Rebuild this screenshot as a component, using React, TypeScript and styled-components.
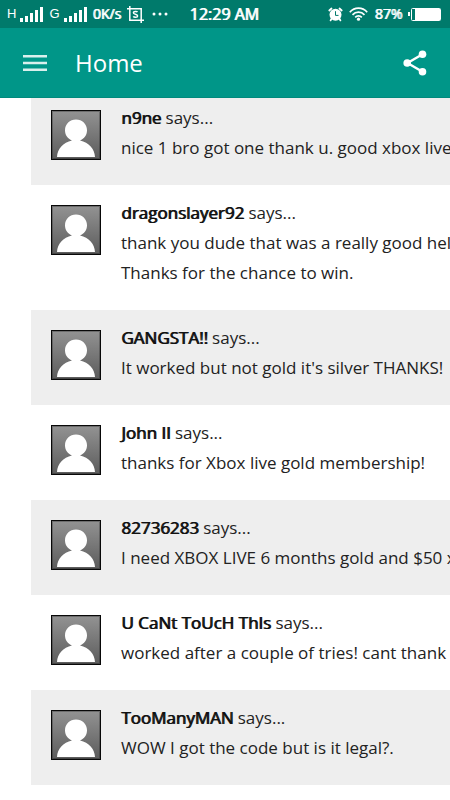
import React from "react";
import styled, { createGlobalStyle } from "styled-components";

const GlobalStyle = createGlobalStyle`
  * { box-sizing: border-box; }
  body {
    margin: 0;
    background: #ffffff;
    color: #222222;
    font-family: "Open Sans", "Noto Sans", sans-serif;
  }
`;

const Screen = styled.div`
  min-height: 100vh;
  overflow: hidden;
`;

const TopBar = styled.header`
  position: relative;
  z-index: 1;
  color: #ffffff;
  background: #009688;
  border-bottom: 1px solid #008a7d;
`;

const StatusBar = styled.div`
  display: grid;
  grid-template-columns: 1fr auto 1fr;
  align-items: center;
  height: 28px;
  padding: 0 9px 0 7px;
  background: #007a6b;
  line-height: 28px;
  font-weight: 400;
  white-space: nowrap;
`;

const StatusGroup = styled.div<{ $end?: boolean }>`
  display: flex;
  align-items: center;
  justify-content: ${(p) => (p.$end ? "flex-end" : "flex-start")};
  gap: 6px;
`;

const StatusText = styled.span`
  font-size: 14px;
  text-shadow: 1px 0 currentColor;
`;

const Clock = styled.time`
  font-size: 16px;
  text-shadow: 1px 0 currentColor;
`;

const Network = styled.span`
  display: flex;
  align-items: center;
  gap: 4px;
  font-family: "Liberation Sans", sans-serif;
  font-size: 13px;
  line-height: 32px;
  height: 28px;
  font-weight: 400;
`;

const Toolbar = styled.div`
  display: flex;
  align-items: center;
  height: 69px;
  padding: 0 20px;
`;

const IconButton = styled.button`
  display: flex;
  align-items: center;
  justify-content: center;
  width: 30px;
  height: 40px;
  padding: 0;
  border: 0;
  background: none;
  color: inherit;
  cursor: pointer;
`;

const Title = styled.h1`
  flex: 1;
  margin: 0 0 0 25px;
  font-size: 24px;
  line-height: 32px;
  font-weight: 400;
`;

const CommentList = styled.ol`
  margin: -8px 0 0 31px;
  padding: 0;
  list-style: none;
`;

const Comment = styled.li`
  display: flex;
  align-items: flex-start;
  gap: 20px;
  padding: 13px 0 22px 20px;
  &:nth-child(odd) { background: #eeeeee; }
`;

const Avatar = styled.svg`
  flex: none;
  width: 50px;
  height: 50px;
  margin-top: 7px;
`;

const CommentText = styled.div`
  font-size: 17px;
  line-height: 30px;
  white-space: nowrap;
`;

const Author = styled.strong`
  font-weight: 400;
  color: #111111;
  text-shadow: 1px 0 currentColor;
`;

const Message = styled.p`
  margin: 0;
`;

const comments = [
  { author: "n9ne", lines: ["nice 1 bro got one thank u. good xbox live"] },
  { author: "dragonslayer92", lines: ["thank you dude that was a really good help", "Thanks for the chance to win."] },
  { author: "GANGSTA!!", lines: ["It worked but not gold it's silver THANKS!"] },
  { author: "John II", lines: ["thanks for Xbox live gold membership!"] },
  { author: "82736283", lines: ["I need XBOX LIVE 6 months gold and $50 xbox"] },
  { author: "U CaNt ToUcH ThIs", lines: ["worked after a couple of tries! cant thank you"] },
  { author: "TooManyMAN", lines: ["WOW I got the code but is it legal?."] },
];

const Signal = () => (
  <svg width="23" height="15" viewBox="0 0 23 15" fill="currentColor" aria-hidden="true">
    <path d="M0 11h3v4H0zM5 9h3v6H5zM10 6h3v9h-3zM15 3h3v12h-3zM20 0h3v15h-3z" />
  </svg>
);

const CropIcon = () => (
  <svg width="17" height="17" viewBox="0 0 17 17" fill="none" stroke="currentColor" strokeWidth="1.5" aria-hidden="true">
    <path d="M0 2.8h14.2V17M2.8 0v14.2H17" />
    <path d="M10.5 6.1C10 5.3 6.4 5 6.4 6.8c0 2 4.2 1 4.2 3.1 0 1.9-3.7 1.6-4.3.5" />
  </svg>
);

const DotsIcon = () => (
  <svg width="19" height="4" viewBox="0 0 19 4" fill="currentColor" aria-hidden="true">
    <circle cx="4" cy="2" r="1.5" /><circle cx="10" cy="2" r="1.5" /><circle cx="16" cy="2" r="1.5" />
  </svg>
);

const AlarmIcon = () => (
  <svg width="15" height="15" viewBox="0 0 15 15" aria-hidden="true">
    <path d="M3.4 12 2.6 13.4M11.6 12l.8 1.400M1.300 3.500l2.200-2M13.700 3.500l-2.200-2" stroke="currentColor" strokeWidth="1.8" strokeLinecap="round" />
    <circle cx="7.5" cy="7.7" r="6" fill="currentColor" />
    <path d="M7.5 4.2v4.200h3" fill="none" stroke="#007a6b" strokeWidth="1" />
  </svg>
);

const WifiIcon = () => (
  <svg width="19" height="14" viewBox="0 0 19 14" fill="none" stroke="currentColor" strokeWidth="1.7" aria-hidden="true">
    <path d="M.8 5.2c4.8-5.3 12.6-5.3 17.4 0M3.5 7.9c3.3-3.7 8.7-3.7 12 0M6.2 10.4c1.8-2 4.8-2 6.6 0" />
    <circle cx="9.5" cy="12.2" r="1.6" fill="currentColor" stroke="none" />
  </svg>
);

const BatteryIcon = () => (
  <svg width="33" height="14" viewBox="0 0 33 14" aria-hidden="true">
    <path d="M0 5h2v4H0z" fill="currentColor" />
    <rect x="3.5" y="1.5" width="29" height="12" rx="1" fill="none" stroke="currentColor" strokeWidth="1" />
    <path d="M7 2h25v11H7z" fill="currentColor" />
  </svg>
);

const MenuIcon = () => (
  <svg width="24" height="16" viewBox="0 0 24 16" fill="#d9f0ed" aria-hidden="true">
    <path d="M0 0h24v2.600H0zM0 6.700h24v2.600H0zM0 13.400h24V16H0z" />
  </svg>
);

const ShareIcon = () => (
  <svg width="24" height="26" viewBox="0 0 24 26" fill="currentColor" aria-hidden="true">
    <path d="M19.5 4.2 4.5 13l15 8.8" fill="none" stroke="currentColor" strokeWidth="2.4" />
    <circle cx="19.5" cy="4.2" r="3.8" /><circle cx="4.2" cy="13" r="3.8" /><circle cx="19.5" cy="21.8" r="3.8" />
  </svg>
);

const Person = () => (
  <Avatar viewBox="0 0 50 50" aria-hidden="true">
    <defs>
      <linearGradient id="avatar-shade" x1="0" y1="0" x2="0" y2="1">
        <stop offset="0" stopColor="#939393" /><stop offset="1" stopColor="#5c5c5c" />
      </linearGradient>
    </defs>
    <rect x=".5" y=".5" width="49" height="49" fill="url(#avatar-shade)" stroke="#080808" />
    <rect x="1.5" y="1.5" width="47" height="47" fill="none" stroke="#000" strokeOpacity=".25" />
    <path d="M6 47c.4-8 6-14.200 15-16.400-4.200-1.800-7-5.500-7-10.300C14 14 18.800 9.400 25 9.400S36 14 36 20.300c0 4.800-2.800 8.500-7 10.300C38 32.800 43.600 39 44 47z" fill="#fff" />
  </Avatar>
);

export default function App() {
  return (
    <Screen>
      <GlobalStyle />
      <TopBar>
        <StatusBar>
          <StatusGroup>
            <Network>H<Signal /></Network>
            <Network>G<Signal /></Network>
            <StatusText>0K/s</StatusText>
            <CropIcon />
            <DotsIcon />
          </StatusGroup>
          <Clock>12:29 AM</Clock>
          <StatusGroup $end>
            <AlarmIcon />
            <WifiIcon />
            <StatusText>87%</StatusText>
            <BatteryIcon />
          </StatusGroup>
        </StatusBar>
        <Toolbar>
          <IconButton aria-label="Open menu"><MenuIcon /></IconButton>
          <Title>Home</Title>
          <IconButton aria-label="Share"><ShareIcon /></IconButton>
        </Toolbar>
      </TopBar>
      <CommentList>
        {comments.map((c) => (
          <Comment key={c.author}>
            <Person />
            <CommentText>
              <div><Author>{c.author}</Author> says...</div>
              {c.lines.map((line) => <Message key={line}>{line}</Message>)}
            </CommentText>
          </Comment>
        ))}
      </CommentList>
    </Screen>
  );
}
